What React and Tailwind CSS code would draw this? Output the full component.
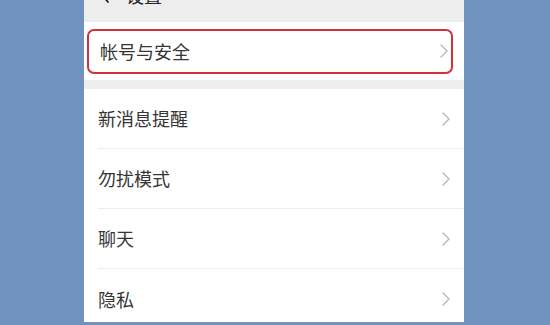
const rows = ["新消息提醒", "勿扰模式", "聊天", "隐私"];

function Chevron() {
  return (
    <svg width="8" height="14" viewBox="0 0 8 14" fill="none" className="shrink-0">
      <path d="M1 1l6 6-6 6" stroke="#b8b8b8" strokeWidth="1.4" strokeLinecap="round" strokeLinejoin="round" />
    </svg>
  );
}

export default function App() {
  return (
    <div
      className="w-[550px] h-[325px] bg-[#7092bf] flex justify-start pl-[84px] overflow-hidden"
      style={{ fontFamily: '"Noto Sans CJK SC", "Noto Sans", sans-serif' }}
    >
      <div className="w-[380px] h-[322px] bg-[#ededed] flex flex-col overflow-hidden">
        {/* Header, mostly scrolled out */}
        <div className="h-[21px] shrink-0 overflow-hidden">
          <div className="flex items-center h-[24px] -mt-[17px] pl-[16px] text-[18px] text-[#222]">
            <svg width="10" height="16" viewBox="0 0 10 16" fill="none">
              <path d="M8 1L2 8l6 7" stroke="#222" strokeWidth="1.8" strokeLinecap="round" strokeLinejoin="round" />
            </svg>
            <span className="ml-[16px] leading-none">设置</span>
          </div>
        </div>

        {/* Account row */}
        <div className="h-[58px] bg-white shrink-0 mt-[1px] flex items-center pl-[3px] pr-[11px]">
          <div className="w-full h-[45px] border-2 border-[#d3303c] rounded-[7px] flex items-center justify-between pl-[11px] pr-[3px]">
            <span className="text-[18px] text-[#353535]">帐号与安全</span>
            <Chevron />
          </div>
        </div>

        {/* Other settings */}
        <div className="mt-[9px] bg-white flex-1 flex flex-col">
          {rows.map((label, i) => (
            <div key={label} className="h-[60px] shrink-0 pl-[14px] flex">
              <div
                className={
                  "flex-1 flex items-center justify-between pr-[14px] " +
                  (i < rows.length - 1 ? "border-b border-[#ececec]" : "")
                }
              >
                <span className="text-[18px] text-[#353535]">{label}</span>
                <Chevron />
              </div>
            </div>
          ))}
        </div>
      </div>
    </div>
  );
}
